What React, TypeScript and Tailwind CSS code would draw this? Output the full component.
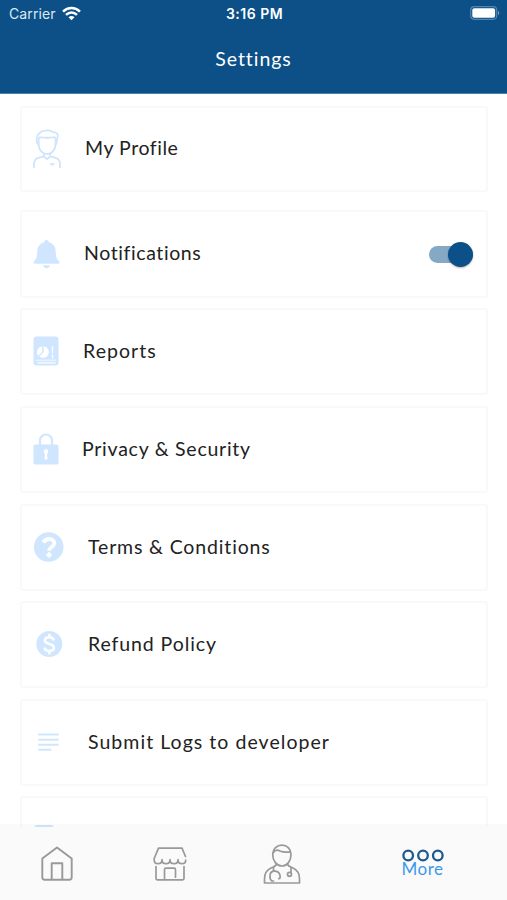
import type { ReactNode } from "react";

function ProfileIcon() {
  return (
    <svg width="28" height="40" viewBox="0 0 28 40" fill="none" stroke="#d0e4fb" strokeWidth="1.8" strokeLinejoin="round">
      <path d="M5.500 16C3 14 2.800 8 5.500 5.200 7.500 2.500 11 1.400 14.500 1.400c2.800 0 4.500.8 6 2 2.800-.2 4.700 1.300 4.300 4-.2 1.200-.8 1.800-.8 3 0 2.500-.3 4.300-1.500 5.600" />
      <path d="M5.700 10.500c-.2-1.800.8-2.500 2.500-2.200 4 .6 8 .6 12 0 1.700-.3 2.500.5 2.400 2.200M5.700 9.500v6c0 5.500 3.800 9.700 8.300 9.700s8.500-4.200 8.500-9.700v-6" />
      <path d="M11 25v2.500l3 2.700 3-2.700V25M11 27.300l-5 1.400C2.500 29.700 1 32 1 35v4M17 27.300l5 1.400c3.500 1 5 3.300 5 6.300v4" />
      <path d="M17 35h4.500M19.500 35v1.800" strokeWidth="1.400" />
    </svg>
  );
}

function BellIcon() {
  return (
    <svg width="27" height="29" viewBox="0 0 27 29" fill="#d0e6ff">
      <path d="M13.500 0c1.300 0 2.200.9 2.200 2.200 4.600 1.100 7.100 5 7.100 9.600 0 4.500.7 7 2.500 8.700.8.800 1.200 1.200 1.200 2 0 .8-.6 1.200-1.300 1.200H1.800C1.100 23.700.5 23.300.5 22.500c0-.8.400-1.200 1.200-2C3.500 18.800 4.200 16.300 4.200 11.800c0-4.600 2.500-8.500 7.100-9.600C11.300.9 12.200 0 13.500 0z" />
      <path d="M10 25.300h7c-.3 1.900-1.700 3-3.500 3s-3.200-1.100-3.500-3z" />
    </svg>
  );
}

function ReportIcon() {
  return (
    <svg width="26" height="30" viewBox="0 0 26 30" fill="none">
      <rect x="0.500" y="0.500" width="25" height="29" rx="3" fill="#d0e6ff" />
      <path d="M9.200 10.500v5.500l-4 3.800A5.700 5.700 0 0 1 9.200 10.500z" fill="#fff" />
      <path d="M10.800 10.300a5.800 5.800 0 1 1-4.500 10.200l4.500-4.500z" fill="#fff" />
      <path d="M19.500 10v7M19.500 18.500v4" stroke="#fff" strokeWidth="1.300" />
      <path d="M3 24.200h20" stroke="#fff" strokeOpacity="0.700" strokeWidth="1.200" />
      <path d="M4.500 26.800h18" stroke="#fff" strokeWidth="1.200" />
    </svg>
  );
}

function LockIcon() {
  return (
    <svg width="26" height="32" viewBox="0 0 26 32" fill="none">
      <path d="M7 12V7.500a6 6 0 0 1 12 0V12" stroke="#d0e6ff" strokeWidth="2.200" />
      <rect x="0.500" y="11.500" width="25" height="20" rx="2" fill="#d0e6ff" />
      <circle cx="13" cy="18.500" r="2.300" fill="#fff" />
      <path d="M12 19h2l.5 7.500h-3z" fill="#fff" />
    </svg>
  );
}

function QuestionIcon() {
  return (
    <svg width="31" height="30" viewBox="0 0 31 30" fill="none">
      <circle cx="15.700" cy="15" r="14.800" fill="#d0e6ff" />
      <path d="M10.300 10.500C11.700 8 13.500 7 15.900 7c3.300 0 5.400 1.700 5.400 4.200 0 3.800-5.300 3.800-5.300 7.600" stroke="#fff" strokeWidth="3.800" />
      <path d="m16 20 2.900 2.900-2.900 2.900-2.900-2.900z" fill="#fff" stroke="#fff" strokeWidth="0.600" />
    </svg>
  );
}

function DollarIcon() {
  return (
    <svg width="31" height="30" viewBox="-1 0 31 30" fill="none">
      <circle cx="15.300" cy="15" r="13" fill="#d0e6ff" />
      <path d="M19.800 11.500c-.4-2.200-2.100-3.300-4.500-3.300-2.700 0-4.400 1.300-4.400 3.300 0 4.600 9 2.300 9 7 0 2.100-1.900 3.500-4.600 3.500s-4.500-1.300-4.800-3.500M15.300 5v3.500M15.300 22v3.300" stroke="#fff" strokeWidth="2.500" />
    </svg>
  );
}

function LinesIcon() {
  return (
    <svg width="31" height="24" viewBox="-1 0 31 24" fill="none" stroke="#d0e6ff" strokeWidth="2">
      <path d="M4.300 4.500h20.400M4.300 9.700h20.400M4.300 14.700h20.400M4.300 19.700h13" />
    </svg>
  );
}

function TabletIcon() {
  return (
    <svg width="26" height="29" viewBox="0 0 26 29">
      <rect x="1" y="0" width="20" height="29" rx="3" fill="#d0e6ff" />
    </svg>
  );
}

function Toggle() {
  return (
    <div className="flex h-[17px] w-[44px] items-center justify-end rounded-full bg-[#85a8c5]">
      <div className="h-[25px] w-[25px] shrink-0 rounded-full bg-[#0b5089] shadow-[0_1px_2px_rgba(0,0,0,0.3)]" />
    </div>
  );
}

interface RowProps {
  icon: ReactNode;
  label?: string;
  className: string;
  labelClass?: string;
  children?: ReactNode;
}

function Row({ icon, label, className, labelClass, children }: RowProps) {
  return (
    <div className={`flex shrink-0 items-center rounded-[3px] border-2 border-[#f9f9f9] bg-white pr-[13px] pl-[11px] ${className}`}>
      {icon}
      <span className={`flex-1 text-[19.500px] leading-6 whitespace-nowrap text-[#222] ${labelClass ?? ""}`}>{label}</span>
      {children}
    </div>
  );
}

function HomeIcon() {
  return (
    <svg width="32" height="36" viewBox="0 0 32 36" fill="none" stroke="#999" strokeWidth="1.900" strokeLinejoin="round">
      <path d="M16 1.500 1.300 12.500v18.700c0 1.600.9 2.500 2.500 2.500h24.400c1.600 0 2.500-.9 2.500-2.500V12.500z" />
      <path d="M10.700 33.700V17.300h10.600v16.400" />
    </svg>
  );
}

function ShopIcon() {
  return (
    <svg width="34" height="34" viewBox="0 0 34 34" fill="none" stroke="#999" strokeWidth="1.700" strokeLinecap="round" strokeLinejoin="round">
      <path d="M32.500 9.500 29 1.200H5.500L1.200 11.500v1.500c0 2 1.500 3.700 3.800 3.700s4-1.700 4-4c0 2.300 1.700 4 4 4s4-1.700 4-4c0 2.300 1.700 4 4 4s4-1.700 4-4c0 2.300 1.700 4 4 4 2.200 0 3.700-1.500 3.700-3.500" />
      <path d="M3 19.500v12c0 .8.500 1.300 1.300 1.300h25.400c.8 0 1.300-.5 1.300-1.300v-12" />
      <path d="M11.500 32.500v-9.800c0-1 .5-1.500 1.500-1.500h8c1 0 1.500.5 1.500 1.500v7.500" />
    </svg>
  );
}

function DoctorIcon() {
  return (
    <svg width="38" height="40" viewBox="0 0 38 40" fill="none" stroke="#999" strokeWidth="1.700" strokeLinecap="round" strokeLinejoin="round">
      <path d="M19 1.200c-5.500 0-9.300 3.800-9.300 9.300 0 6.300 4 11.500 9.300 11.500s9-5.200 9-11.500c0-5.500-3.600-9.300-9-9.300z" />
      <path d="M10 9c2-3 4.300-3.500 7-2 3.500 1.700 7 .8 10.500 1.200" />
      <path d="M13.500 20.500c-1 2-3.200 2.500-5.500 3.500-4.500 2-6.500 6-6.500 11v4h35v-4c0-5-2-9-6.500-11-2.300-1-4.500-1.500-5.500-3.500" />
      <path d="M10.500 23.500v3.500M9 37c-1.800-1-2.200-3-2-5.500.2-2.800 2-4.300 4.500-4.300s5 1.700 5.500 4.300c.4 2.300 0 3-1.200 3.200M9 37h1.500" />
      <path d="M28 23.500v5" />
      <circle cx="26.500" cy="30.300" r="2" />
    </svg>
  );
}

export default function App() {
  return (
    <div className="flex h-[900px] w-[507px] flex-col overflow-hidden bg-white font-['Lato',sans-serif]">
      {/* Status bar + title */}
      <header className="h-[94px] shrink-0 border-b border-[#4a7fae] bg-[#0c5087] text-white">
        <div className="grid h-7 grid-cols-3 items-center pr-[7px] pl-[9px] font-['Inter',sans-serif]">
          <div className="flex items-center gap-[6px] pb-[2px] text-[14px] text-[#dce9f5]">
            <span className="tracking-[0.100px]">Carrier</span>
            <svg width="19" height="15" viewBox="0 0 19 15" fill="none" stroke="#fff" strokeWidth="2.600">
              <path d="M1 5.600c5-4.900 12-4.900 17 0M4 8.900c3.300-3 7.700-3 11 0" />
              <path d="M9.500 14.200 6.500 11.200c1.800-1.600 4.200-1.600 6 0z" fill="#fff" stroke="none" />
            </svg>
          </div>
          <span className="pb-[2px] text-center text-[14px] font-semibold tracking-[0.500px]">3:16 PM</span>
          <div className="flex items-center justify-end pb-[2px]">
            <svg width="30" height="14" viewBox="0 0 30 14" fill="none">
              <rect x="0.700" y="0.700" width="26" height="12.600" rx="3.500" stroke="#5585ae" strokeWidth="1.200" />
              <rect x="2.300" y="2.300" width="22.800" height="9.400" rx="2" fill="#fff" />
              <path d="M28 4.800c1.800.8 1.800 3.600 0 4.400z" fill="#6f9abd" />
            </svg>
          </div>
        </div>
        <h1 className="mt-[17px] text-center text-[19.500px] leading-7 tracking-[0.950px]">Settings</h1>
      </header>

      {/* Settings list */}
      <main className="flex flex-1 flex-col overflow-hidden pt-[12px] pr-[19px] pl-5">
        <Row icon={<ProfileIcon />} label="My Profile" className="h-[86px]" labelClass="ml-[24px] pb-[2px] tracking-[0.550px]" />
        <Row icon={<BellIcon />} label="Notifications" className="mt-[18px] h-[88px]" labelClass="ml-[24px] pb-[2px] tracking-[0.600px]">
          <Toggle />
        </Row>
        <Row icon={<ReportIcon />} label="Reports" className="mt-[10px] h-[87px] pb-px" labelClass="ml-[24px] pb-px tracking-[1.050px]" />
        <Row icon={<LockIcon />} label="Privacy & Security" className="mt-[11px] h-[87px] pb-px" labelClass="ml-[23px] pb-px tracking-[0.750px]" />
        <Row icon={<QuestionIcon />} label="Terms & Conditions" className="mt-[11px] h-[87px] pb-px" labelClass="ml-[24px] pb-px tracking-[0.850px]" />
        <Row icon={<DollarIcon />} label="Refund Policy" className="mt-[10px] h-[87px] pb-px" labelClass="ml-[24px] pb-px tracking-[0.900px]" />
        <Row icon={<LinesIcon />} label="Submit Logs to developer" className="mt-[11px] h-[87px] pb-px" labelClass="ml-[24px] pb-px tracking-[1.050px]" />
        <Row icon={<TabletIcon />} className="mt-[10px] h-[87px]" />
      </main>

      {/* Tab bar, its top edge is see-through */}
      <nav className="relative mt-[-3px] grid h-[76px] shrink-0 grid-cols-[113px_113px_112px_169px] items-center justify-items-center border-t-[3px] border-black/[0.02] bg-[#fafafa] bg-clip-padding">
        <HomeIcon />
        <ShopIcon />
        <DoctorIcon />
        <div className="flex flex-col items-center pb-[3px]">
          <svg width="42" height="13" viewBox="0 0 42 13" fill="none" stroke="#1d5a90" strokeWidth="2.300">
            <circle cx="6.200" cy="6.500" r="4.800" />
            <circle cx="21" cy="6.500" r="4.800" />
            <circle cx="35.800" cy="6.500" r="4.800" />
          </svg>
          <span className="text-[17px] leading-[14px] tracking-[0.500px] text-[#3b99ea]">More</span>
        </div>
      </nav>
    </div>
  );
}
